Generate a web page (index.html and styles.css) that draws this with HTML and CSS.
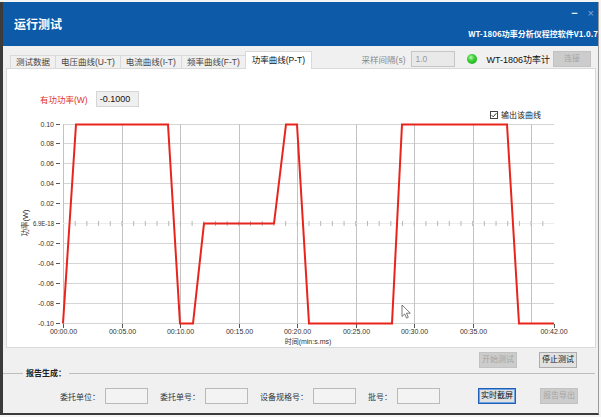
FILE: index.html
```html
<!DOCTYPE html>
<html>
<head>
<meta charset="utf-8">
<title>运行测试</title>
<link rel="stylesheet" href="styles.css">
</head>
<body>
<div class="window">
  <header class="titlebar">
    <div class="title">运行测试</div>
    <div class="title-right">
      <div class="win-ctrls"><span class="min">−</span><span class="close">×</span></div>
      <div class="app-name">WT-1806功率分析仪程控软件V1.0.7</div>
    </div>
  </header>

  <div class="tabbar">
    <div class="tabs">
      <div class="tab">测试数据</div>
      <div class="tab">电压曲线(U-T)</div>
      <div class="tab">电流曲线(I-T)</div>
      <div class="tab">频率曲线(F-T)</div>
      <div class="tab active">功率曲线(P-T)</div>
    </div>
    <div class="conn">
      <span class="lbl-gray">采样间隔(s)</span>
      <div class="inp-dis">1.0</div>
      <span class="led"></span>
      <span class="dev">WT-1806功率计</span>
      <button class="btn dis btn-conn">连接</button>
    </div>
  </div>

  <section class="panel">
    <div class="readout">
      <span class="rd-label">有功功率(W)</span>
      <div class="rd-box">-0.1000</div>
    </div>
    <div class="chk-row">
      <svg class="chk" width="8" height="8" viewBox="0 0 8 8"><rect x="0.5" y="0.5" width="7" height="7" class="chk-box"/><polyline points="1.6,4.2 3.2,5.8 6.4,2.2" class="chk-mark"/></svg>
      <span>输出该曲线</span>
    </div>
    <svg class="chart" width="588" height="226" viewBox="0 0 588 226">
      <g class="grid-h">
        <line x1="56" y1="3.5" x2="547" y2="3.5"/>
        <line x1="56" y1="22.5" x2="547" y2="22.5"/>
        <line x1="56" y1="42.5" x2="547" y2="42.5"/>
        <line x1="56" y1="62.5" x2="547" y2="62.5"/>
        <line x1="56" y1="82.5" x2="547" y2="82.5"/>
        <line x1="56" y1="122.5" x2="547" y2="122.5"/>
        <line x1="56" y1="142.5" x2="547" y2="142.5"/>
        <line x1="56" y1="162.5" x2="547" y2="162.5"/>
        <line x1="56" y1="182.5" x2="547" y2="182.5"/>
        <line x1="56" y1="202.5" x2="547" y2="202.5"/>
      </g>
      <g class="grid-v">
        <line x1="56.5" y1="3" x2="56.5" y2="203"/>
        <line x1="115.5" y1="3" x2="115.5" y2="203"/>
        <line x1="173.5" y1="3" x2="173.5" y2="203"/>
        <line x1="232.5" y1="3" x2="232.5" y2="203"/>
        <line x1="290.5" y1="3" x2="290.5" y2="203"/>
        <line x1="349.5" y1="3" x2="349.5" y2="203"/>
        <line x1="407.5" y1="3" x2="407.5" y2="203"/>
        <line x1="466.5" y1="3" x2="466.5" y2="203"/>
        <line x1="524.5" y1="3" x2="524.5" y2="203"/>
      </g>
      <line class="zero" x1="56" y1="102.5" x2="547" y2="102.5"/>
      <line class="zero-ticks" x1="67.7" y1="102.5" x2="547" y2="102.5"/>
      <path class="ticks" d="M49 3.5h4M49 22.5h4M49 42.5h4M49 62.5h4M49 82.5h4M49 102.5h4M49 122.5h4M49 142.5h4M49 162.5h4M49 182.5h4M49 202.5h4M56.5 203v4M115.5 203v4M173.5 203v4M232.5 203v4M290.5 203v4M349.5 203v4M407.5 203v4M466.5 203v4M547.5 203v4"/>
      <g class="lab ylab">
        <text x="47" y="6">0.10</text>
        <text x="47" y="25">0.08</text>
        <text x="47" y="45">0.06</text>
        <text x="47" y="65">0.04</text>
        <text x="47" y="85">0.02</text>
        <text x="47" y="105" textLength="21" lengthAdjust="spacingAndGlyphs">6.9E-18</text>
        <text x="47" y="125">-0.02</text>
        <text x="47" y="145">-0.04</text>
        <text x="47" y="165">-0.06</text>
        <text x="47" y="185">-0.08</text>
        <text x="47" y="205">-0.10</text>
      </g>
      <g class="lab xlab">
        <text x="56.5" y="213">00:00.00</text>
        <text x="115.5" y="213">00:05.00</text>
        <text x="173.5" y="213">00:10.00</text>
        <text x="232.5" y="213">00:15.00</text>
        <text x="290.5" y="213">00:20.00</text>
        <text x="349.5" y="213">00:25.00</text>
        <text x="407.5" y="213">00:30.00</text>
        <text x="466.5" y="213">00:35.00</text>
        <text x="547" y="213">00:42.00</text>
      </g>
      <text class="lab title-y" transform="translate(21 102) rotate(-90)">功率(W)</text>
      <text class="lab title-x" x="301" y="223">时间(min:s.ms)</text>
      <polyline class="curve" points="56,202.5 69,3.5 161,3.5 173,202.5 186,202.5 197,102.5 267,102.5 279,3.5 290,3.5 302,202.5 385,202.5 395,3.5 500,3.5 512,202.5 547,202.5"/>
      <path class="cursor" d="M395 184v11.5l2.7-2.6l1.8 4.2l1.8-0.8l-1.8-4.1h3.8z"/>
    </svg>
  </section>

  <div class="actions">
    <button class="btn dis">开始测试</button>
    <button class="btn">停止测试</button>
  </div>

  <div class="report-head"><span class="legend">报告生成：</span></div>
  <div class="fields">
    <span class="f-label">委托单位：</span><span class="f-input"></span>
    <span class="f-label">委托单号：</span><span class="f-input"></span>
    <span class="f-label">设备规格号：</span><span class="f-input"></span>
    <span class="f-label">批号：</span><span class="f-input"></span>
    <button class="btn snap">实时截屏</button>
    <button class="btn dis export">报告导出</button>
  </div>
</div>
</body>
</html>
```

FILE: styles.css
```css
* { box-sizing: border-box; margin: 0; padding: 0; }
html, body { width: 601px; height: 417px; overflow: hidden; }
body {
  background: #f4f4f4;
  font-family: "Liberation Sans", "Noto Sans CJK SC", sans-serif;
  font-size: 8px;
  color: #222;
}

.window {
  width: 599px;
  height: 413px;
  margin-top: 2px;
  background: #f0f0f0;
  border-left: 3px solid #3b3b3b;
  border-right: 1px solid #9a9a9a;
  border-bottom: 2px solid #3b3b3b;
  display: flex;
  flex-direction: column;
}

/* title bar */
.titlebar {
  height: 44px;
  flex: none;
  background: #0d5aa8;
  color: #fff;
  display: flex;
  justify-content: space-between;
  align-items: center;
  padding-left: 11px;
}
.title {
  font-family: "Noto Sans CJK SC", sans-serif;
  font-size: 12px;
  font-weight: bold;
  line-height: 14px;
}
.title-right {
  align-self: stretch;
  display: flex;
  flex-direction: column;
  align-items: flex-end;
  padding-top: 4px;
}
.win-ctrls {
  display: flex;
  gap: 10px;
  font-size: 11px;
  line-height: 14px;
  padding-right: 4px;
}
.min { color: #e4ecf6; font-weight: bold; }
.close { color: #86a9d6; }
.app-name {
  margin-top: 8px;
  font-family: "Noto Sans CJK SC", sans-serif;
  font-size: 8px;
  font-weight: bold;
  line-height: 12px;
  white-space: nowrap;
}

/* tab bar */
.tabbar {
  height: 22px;
  flex: none;
  display: flex;
  align-items: flex-end;
  padding: 0 7px;
}
.tabs { display: flex; align-items: flex-end; }
.tab {
  height: 13px;
  padding: 0 5px;
  font-size: 8.5px;
  line-height: 12px;
  color: #444;
  background: #f0f0f0;
  border: 1px solid #d9d9d9;
  border-bottom: none;
  margin-right: -1px;
  white-space: nowrap;
}
.tab.active {
  height: 18px;
  padding: 0 6px;
  line-height: 16px;
  color: #111;
  background: #fff;
  margin-bottom: -1px;
  position: relative;
  z-index: 1;
}
.conn {
  margin-left: auto;
  align-self: flex-start;
  margin-top: 5px;
  height: 16px;
  display: flex;
  align-items: center;
}
.lbl-gray { color: #888; font-size: 8.5px; margin-right: 6px; white-space: nowrap; }
.inp-dis {
  width: 44px;
  height: 16px;
  background: #e9e9e9;
  border: 1px solid #c6c6c6;
  color: #9a9a9a;
  font-size: 8.5px;
  line-height: 14px;
  padding-left: 3px;
}
.led {
  width: 10px;
  height: 10px;
  border-radius: 50%;
  margin-left: 12px;
  background: radial-gradient(circle at 40% 35%, #c4f8b4 0, #3fd33a 35%, #149b12 100%);
}
.dev { font-size: 9px; margin-left: 9px; color: #111; white-space: nowrap; }
.btn-conn { margin-left: 3px; width: 27px; }

/* buttons */
.btn {
  width: 38px;
  height: 16px;
  font-family: "Liberation Sans", "Noto Sans CJK SC", sans-serif;
  font-size: 8px;
  line-height: 14px;
  background: #e1e1e1;
  border: 1px solid #adadad;
  color: #111;
  padding: 0;
}
.btn.dis { background: #cccccc; border-color: #c2c2c2; color: #a5a5a5; }

/* panel */
.panel {
  flex: none;
  height: 280px;
  margin: 0 2px 0 3px;
  background: #fff;
  border: 1px solid #d9d9d9;
  display: flex;
  flex-direction: column;
}
.readout {
  display: flex;
  align-items: center;
  height: 16px;
  margin-top: 22px;
  padding-left: 33px;
}
.rd-label { color: #e2312a; font-size: 8.5px; margin-right: 8px; white-space: nowrap; }
.rd-box {
  width: 43px;
  height: 16px;
  background: #efefef;
  border: 1px solid #d6d6d6;
  font-size: 9px;
  line-height: 14px;
  padding-left: 3px;
  color: #111;
}
.chk-row {
  display: flex;
  justify-content: flex-end;
  align-items: center;
  gap: 3px;
  height: 13px;
  margin-top: 1px;
  padding-right: 54px;
  font-size: 8px;
  color: #222;
}
.chk { display: block; }
.chk-box { fill: #fff; stroke: #444; stroke-width: 1; }
.chk-mark { fill: none; stroke: #333; stroke-width: 1; }

.chart { display: block; }
.grid-h line { stroke: #d4d4d4; stroke-width: 1; }
.grid-v line { stroke: #c3c3c3; stroke-width: 1; }
.zero { stroke: #ececec; stroke-width: 1; }
.zero-ticks { stroke: #b7b7b7; stroke-width: 5; stroke-dasharray: 1 10.69; }
.ticks { stroke: #555; stroke-width: 1; fill: none; }
.lab {
  font-family: "Liberation Sans", "Noto Sans CJK SC", sans-serif;
  font-size: 7px;
  fill: #333;
}
.ylab { text-anchor: end; }
.xlab { text-anchor: middle; }
.title-y { text-anchor: middle; font-size: 7.5px; }
.title-x { text-anchor: middle; }
.curve { fill: none; stroke: #e8251c; stroke-width: 2; stroke-linejoin: miter; }
.cursor { fill: #fff; stroke: #444; stroke-width: 0.7; }

/* actions */
.actions {
  display: flex;
  justify-content: flex-end;
  gap: 22px;
  height: 16px;
  margin-top: 4px;
  padding-right: 21px;
}

/* report group */
.report-head {
  display: flex;
  align-items: center;
  height: 10px;
}
.report-head::before {
  content: "";
  width: 20px;
  border-top: 1px solid #bdbdbd;
}
.report-head::after {
  content: "";
  flex: 1;
  border-top: 1px solid #bdbdbd;
  margin-right: 3px;
}
.legend {
  font-family: "Noto Sans CJK SC", sans-serif;
  font-weight: bold;
  font-size: 8px;
  line-height: 10px;
  padding: 0 3px;
  color: #222;
}
.fields {
  display: flex;
  align-items: center;
  height: 16px;
  margin-top: 10px;
  padding-left: 57px;
}
.f-label { font-size: 8px; color: #333; margin-right: 5px; white-space: nowrap; }
.f-input {
  width: 43px;
  height: 16px;
  background: #f3f3f3;
  border: 1px solid #b9b9b9;
  margin-right: 12px;
}
.snap {
  margin-left: 26px;
  border: 1px solid #1f5fb5;
  box-shadow: inset 0 0 0 1px #6ea2e2;
}
.export { margin-left: 24px; }
```
